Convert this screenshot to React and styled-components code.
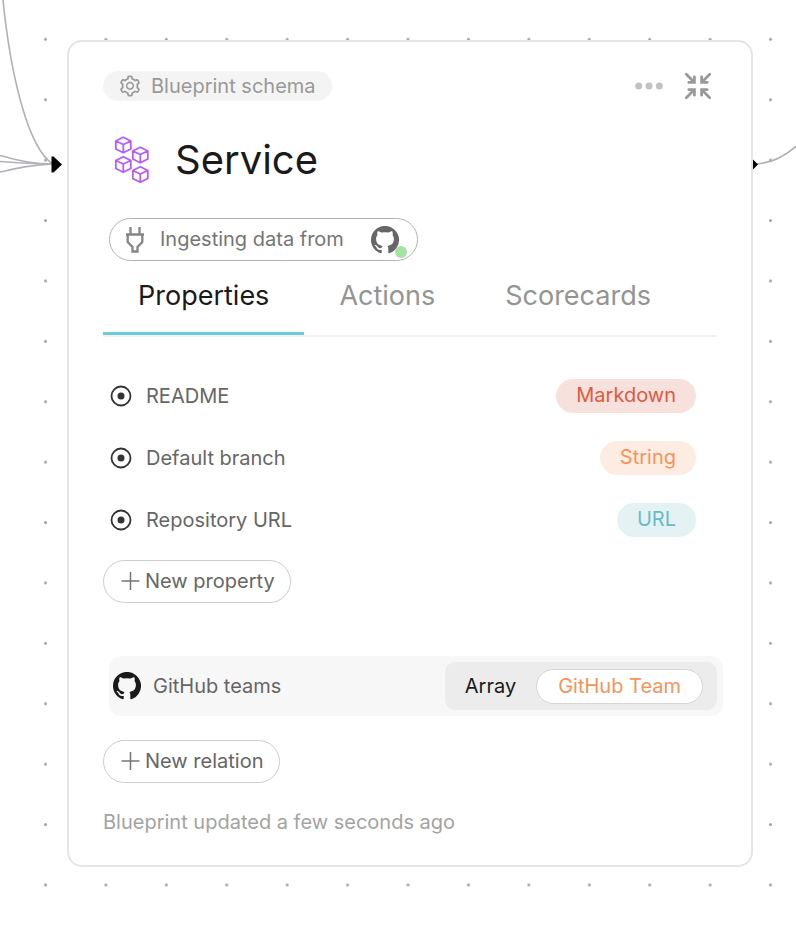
import React, { useState } from 'react';
import styled, { createGlobalStyle } from 'styled-components';
import { AiOutlineSetting } from 'react-icons/ai';

const GlobalStyle = createGlobalStyle`
  *, *::before, *::after { box-sizing: border-box; }
  body {
    margin: 0;
    background: #fff;
    color: #666;
    font-family: Inter, "Open Sans", sans-serif;
    font-size: 20px;
    line-height: 24px;
  }
  button { font: inherit; color: inherit; background: none; border: 0; padding: 0; cursor: pointer; }
  svg { display: block; flex: none; }
  h1, p, ul { margin: 0; padding: 0; }
`;

const Canvas = styled.main`
  position: relative;
  min-height: 100vh;
  padding: 40px 43px 59px 67px;
  overflow: hidden;
`;

const DotGrid = styled.svg`
  position: absolute;
  inset: 0;
  width: 100%;
  height: 100%;
`;

const Card = styled.article`
  position: relative;
  display: flex;
  flex-direction: column;
  align-items: flex-start;
  padding: 29px 34px 31px;
  border: 2px solid #e5e5e5;
  border-radius: 15px;
  background: #fff;
`;

const Edges = styled.svg`
  position: absolute;
  top: -42px;
  overflow: visible;
  fill: none;
  stroke: #b1b1b7;
  stroke-width: 1.6;
  ${({ $side }) => ($side === 'left' ? 'right: calc(100% + 2px);' : 'left: calc(100% + 2px);')}
`;

const Header = styled.header`
  display: flex;
  align-items: center;
  justify-content: space-between;
  width: 100%;
  padding-right: 5px;
`;

const SchemaChip = styled.span`
  display: flex;
  align-items: center;
  gap: 9px;
  height: 30px;
  padding: 0 16px 0 15px;
  border-radius: 15px;
  background: #f4f4f4;
  color: #999;
`;

const HeaderActions = styled.div`
  display: flex;
  align-items: center;
  gap: 21px;
`;

const Title = styled.div`
  display: flex;
  align-items: center;
  gap: 25px;
  padding: 35px 0 34px 11px;
`;

const Name = styled.h1`
  color: #1a1a1a;
  font-size: 40px;
  font-weight: 400;
  line-height: 48px;
`;

const Source = styled.button`
  display: flex;
  align-items: center;
  height: 43px;
  margin-left: 6px;
  padding: 0 18px 0 15px;
  border: 1px solid #b3b3b3;
  border-radius: 22px;
  color: #757575;
`;

const SourceLabel = styled.span`
  padding: 0 27px 2px 15px;
`;

const Status = styled.span`
  position: relative;
  color: #666;
  &::after {
    content: '';
    position: absolute;
    right: -8px;
    bottom: -4px;
    width: 12px;
    height: 12px;
    border-radius: 50%;
    background: #a3e4a3;
  }
`;

const Tabs = styled.div`
  display: flex;
  width: 100%;
  border-bottom: 2px solid #f1f1f1;
`;

const Tab = styled.button`
  height: 74px;
  padding: 0 35px 2px;
  border-bottom: 3px solid ${({ $active }) => ($active ? '#6bcbd9' : 'transparent')};
  color: ${({ $active }) => ($active ? '#1a1a1a' : '#949494')};
  font-size: 27px;
  line-height: 32px;
`;

const Rows = styled.ul`
  width: 100%;
  padding: 28px 21px 9px 7px;
  list-style: none;
`;

const Row = styled.li`
  display: flex;
  align-items: center;
  gap: 14px;
  height: 62px;
`;

const tones = {
  red: ['#f7e1dd', '#dc5b3f'],
  orange: ['#fdece1', '#f4945c'],
  teal: ['#e4f2f4', '#69bbc8'],
};

const TypeTag = styled.span`
  margin-left: auto;
  height: 34px;
  padding: 0 20px;
  border-radius: 17px;
  background: ${({ $tone }) => tones[$tone][0]};
  color: ${({ $tone }) => tones[$tone][1]};
  line-height: 33px;
`;

const AddButton = styled.button`
  display: flex;
  align-items: center;
  gap: 4px;
  height: 43px;
  padding: 0 15px 1px 17px;
  border: 1px solid #ccc;
  border-radius: 22px;
`;

const Relation = styled.div`
  display: flex;
  align-items: center;
  align-self: stretch;
  gap: 12px;
  height: 60px;
  margin: 53px -6px 24px 6px;
  padding: 0 6px 0 4px;
  border-radius: 12px;
  background: #f7f7f7;
`;

const RelationIcon = styled.span`
  color: #1a1a1a;
`;

const Target = styled.div`
  display: flex;
  align-items: center;
  gap: 20px;
  height: 48px;
  margin-left: auto;
  padding: 0 14px 0 20px;
  border-radius: 10px;
  background: #ececec;
  color: #1a1a1a;
`;

const TargetButton = styled.button`
  height: 35px;
  padding: 0 21px;
  border: 1px solid #d5d5d5;
  border-radius: 18px;
  background: #fff;
  color: #f4945c;
`;

const Updated = styled.p`
  padding-top: 27px;
  color: #a3a3a3;
`;

const properties = [
  { name: 'README', type: 'Markdown', tone: 'red' },
  { name: 'Default branch', type: 'String', tone: 'orange' },
  { name: 'Repository URL', type: 'URL', tone: 'teal' },
];

const MoreIcon = () => (
  <svg width="28" height="8" viewBox="0 0 28 8" fill="#c2c2c2">
    <circle cx="3.700" cy="4" r="3.500" />
    <circle cx="14" cy="4" r="3.500" />
    <circle cx="24.300" cy="4" r="3.500" />
  </svg>
);

const CollapseIcon = () => (
  <svg width="28" height="28" viewBox="0 0 28 28" fill="none" stroke="#999" strokeWidth="2.800" strokeLinecap="round">
    {[0, 90, 180, 270].map((angle) => (
      <path key={angle} transform={`rotate(${angle} 14 14)`} d="M2.300 2.300L10.200 10.200M10.400 4.800V10.400H4.800" />
    ))}
  </svg>
);

const CubesIcon = () => (
  <svg width="36" height="48" viewBox="0 0 36 48" fill="none" stroke="#b75cf5" strokeWidth="1.800" strokeLinejoin="round">
    {[[9.300, 9], [26.300, 19], [9.300, 28.500], [26.300, 38.500]].map(([x, y]) => (
      <path key={`${x}-${y}`} transform={`translate(${x} ${y})`} d="M0-7.800L7.500-4V4L0 7.800L-7.500 4V-4ZM-7.500-4L0-.5L7.500-4M0-.5V7.800" />
    ))}
  </svg>
);

const PlugIcon = () => (
  <svg width="20" height="26" viewBox="0 0 20 26" fill="none" stroke="#858585" strokeWidth="2.300">
    <path d="M5.500 0V7M14.500 0V7M1 7.500H19M2.700 7.500V15L7.500 20V24.500H12.500V20L17.300 15V7.500" />
  </svg>
);

const GitHubIcon = () => (
  <svg width="28" height="28" viewBox="0 0 28 28" fill="currentColor">
    <path d="M9.800 27.300C4.100 25.500 0 20.200 0 14A14 14 0 1 1 18.200 27.300C17.500 27.400 17.300 27 17.300 26.600V22.700C17.300 21.300 16.900 20.500 16.300 19.900C19.700 19.500 22.900 18.200 22.900 12.800C22.900 11.200 22.300 10 21.500 9C21.700 8.500 22.100 7 21.300 5.200C21.300 5.200 20 4.800 17.500 6.600A14 14 0 0 0 10.500 6.600C8 4.800 6.700 5.200 6.700 5.200C5.900 7 6.300 8.500 6.500 9C5.700 10 5.100 11.200 5.100 12.800C5.100 18.200 8.300 19.500 11.600 19.900C11.200 20.300 10.800 20.900 10.700 21.800C9.800 22.200 7.700 22.800 6.500 20.600C6.500 20.600 5.700 19.200 4.300 19.100C4.300 19.100 3 19.100 4.200 20C4.200 20 5.100 20.400 5.700 22C5.700 22 6.600 24.800 10.700 23.900V26.600C10.700 27 10.500 27.400 9.800 27.300Z" />
  </svg>
);

const TargetIcon = () => (
  <svg width="22" height="22" viewBox="0 0 22 22">
    <circle cx="11" cy="11" r="9.500" fill="none" stroke="#333" strokeWidth="1.800" />
    <circle cx="11" cy="11" r="3.500" fill="#333" />
  </svg>
);

const PlusIcon = () => (
  <svg width="20" height="20" viewBox="0 0 20 20" stroke="#757575" strokeWidth="1.500">
    <path d="M.5 10H18.500M9.500 1V19" />
  </svg>
);

export default function App() {
  const [active, setActive] = useState('Properties');
  return (
    <>
      <GlobalStyle />
      <Canvas>
        <DotGrid aria-hidden="true">
          <pattern id="dots" x="15.300" y="9.100" width="60.420" height="60.400" patternUnits="userSpaceOnUse">
            <circle cx="30.200" cy="30.200" r="1.500" fill="#a3a3a3" />
          </pattern>
          <rect width="100%" height="100%" fill="url(#dots)" />
        </DotGrid>
        <Card>
          <Edges $side="left" width="67" height="200" viewBox="0 0 67 200" aria-hidden="true">
            <path d="M3 0C10 70 27 148 53 164M0 155.500C18 160 30 164 53 164M0 161.500C18 163 30 164 53 164M0 172C18 168 30 165 53 164" />
            <path d="M51.500 156.500H53.500L62 164.500L53.500 172.500H51.500Z" fill="#000" stroke="none" />
          </Edges>
          <Edges $side="right" width="43" height="200" viewBox="0 0 43 200" aria-hidden="true">
            <path d="M4 164C18 163 31 157 44 145.500" />
            <path d="M0 159.500L5 164.500L0 169.500Z" fill="#000" stroke="none" />
          </Edges>
          <Header>
            <SchemaChip><AiOutlineSetting size={24} />Blueprint schema</SchemaChip>
            <HeaderActions>
              <button type="button" aria-label="More options"><MoreIcon /></button>
              <button type="button" aria-label="Collapse"><CollapseIcon /></button>
            </HeaderActions>
          </Header>
          <Title><CubesIcon /><Name>Service</Name></Title>
          <Source type="button">
            <PlugIcon />
            <SourceLabel>Ingesting data from</SourceLabel>
            <Status><GitHubIcon /></Status>
          </Source>
          <Tabs role="tablist">
            {['Properties', 'Actions', 'Scorecards'].map((tab) => (
              <Tab key={tab} type="button" role="tab" aria-selected={active === tab} $active={active === tab} onClick={() => setActive(tab)}>
                {tab}
              </Tab>
            ))}
          </Tabs>
          <Rows>
            {properties.map(({ name, type, tone }) => (
              <Row key={name}><TargetIcon />{name}<TypeTag $tone={tone}>{type}</TypeTag></Row>
            ))}
          </Rows>
          <AddButton type="button"><PlusIcon />New property</AddButton>
          <Relation>
            <RelationIcon><GitHubIcon /></RelationIcon>
            GitHub teams
            <Target>Array<TargetButton type="button">GitHub Team</TargetButton></Target>
          </Relation>
          <AddButton type="button"><PlusIcon />New relation</AddButton>
          <Updated>Blueprint updated a few seconds ago</Updated>
        </Card>
      </Canvas>
    </>
  );
}
